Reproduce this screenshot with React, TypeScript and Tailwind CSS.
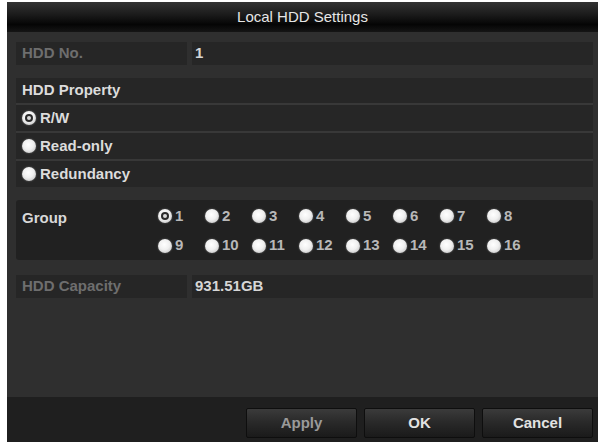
const font = { fontFamily: '"Liberation Sans", Arial, sans-serif' };

function Radio({ checked }: { checked?: boolean }) {
  return (
    <span className="flex h-[14px] w-[14px] shrink-0 items-center justify-center rounded-full bg-[radial-gradient(circle_at_45%_40%,#ffffff_0%,#f0f0f0_45%,#b5b5b5_100%)] shadow-[0_0_2px_rgba(255,255,255,0.35)]">
      {checked && (
        <span className="flex h-[8px] w-[8px] items-center justify-center rounded-full bg-[#2a2a2a]">
          <span className="h-[4px] w-[4px] rounded-full bg-[#d8d8d8]" />
        </span>
      )}
    </span>
  );
}

function FieldRow({ label, value }: { label: string; value: string }) {
  return (
    <div className="flex h-[23px] gap-[5px]">
      <div className="flex w-[171px] items-center bg-[#262626] pl-[6px] text-[15px] font-bold text-[#6e6e6e]">
        {label}
      </div>
      <div className="flex flex-1 items-center bg-[#262626] pl-[3px] text-[15px] font-bold text-[#d6d6d6]">
        {value}
      </div>
    </div>
  );
}

const propertyOptions = ['R/W', 'Read-only', 'Redundancy'];

export default function App() {
  const groups = Array.from({ length: 16 }, (_, i) => i + 1);

  return (
    <div className="h-[442px] w-[598px] bg-white pl-[7px] pt-[2px]" style={font}>
      <div className="flex h-[440px] flex-col bg-[#2f2f2f]">
        {/* title bar */}
        <div className="flex h-[30px] items-center justify-center bg-[linear-gradient(#333333_0%,#1c1c1c_40%,#050505_75%,#151515_100%)] text-[15px] text-[#e6e6e6]">
          Local HDD Settings
        </div>

        <div className="flex flex-1 flex-col pl-[9px] pr-[5px] pt-[10px]">
          <FieldRow label="HDD No." value="1" />

          {/* property */}
          <div className="mt-[13px] flex flex-col gap-[2px] bg-[#383838]">
            <div className="flex h-[25px] items-center bg-[#262626] pl-[6px] text-[15px] font-bold text-[#dcdcdc]">
              HDD Property
            </div>
            {propertyOptions.map((opt, i) => (
              <div
                key={opt}
                className="flex h-[26px] items-center gap-[4px] bg-[#262626] pl-[6px] text-[15px] font-bold text-[#dcdcdc]"
              >
                <Radio checked={i === 0} />
                {opt}
              </div>
            ))}
          </div>

          {/* group */}
          <div className="mt-[13px] flex h-[60px] rounded-[3px] bg-[#212121] pl-[6px] pt-[7px]">
            <div className="w-[136px] text-[15px] font-bold text-[#d8d8d8]">Group</div>
            <div className="grid grid-cols-[repeat(8,47px)] gap-y-[6px]">
              {groups.map((g) => (
                <div key={g} className="flex h-[18px] items-center gap-[3px] text-[15px] font-bold text-[#b8b8b8]">
                  <Radio checked={g === 1} />
                  {g}
                </div>
              ))}
            </div>
          </div>

          <div className="mt-[15px]">
            <FieldRow label="HDD Capacity" value="931.51GB" />
          </div>
        </div>

        {/* footer */}
        <div className="flex h-[45px] items-start justify-end gap-[7px] bg-[#1f1f1f] pr-[5px] pt-[11px]">
          {['Apply', 'OK', 'Cancel'].map((b) => (
            <button
              key={b}
              className={`flex h-[30px] w-[111px] items-center justify-center rounded-[2px] border border-[#0e0e0e] bg-[linear-gradient(#3b3b3b_0%,#2a2a2a_45%,#1a1a1a_100%)] text-[15px] font-bold ${
                b === 'Apply' ? 'text-[#9a9a9a]' : 'text-[#e2e2e2]'
              }`}
            >
              {b}
            </button>
          ))}
        </div>
      </div>
    </div>
  );
}
